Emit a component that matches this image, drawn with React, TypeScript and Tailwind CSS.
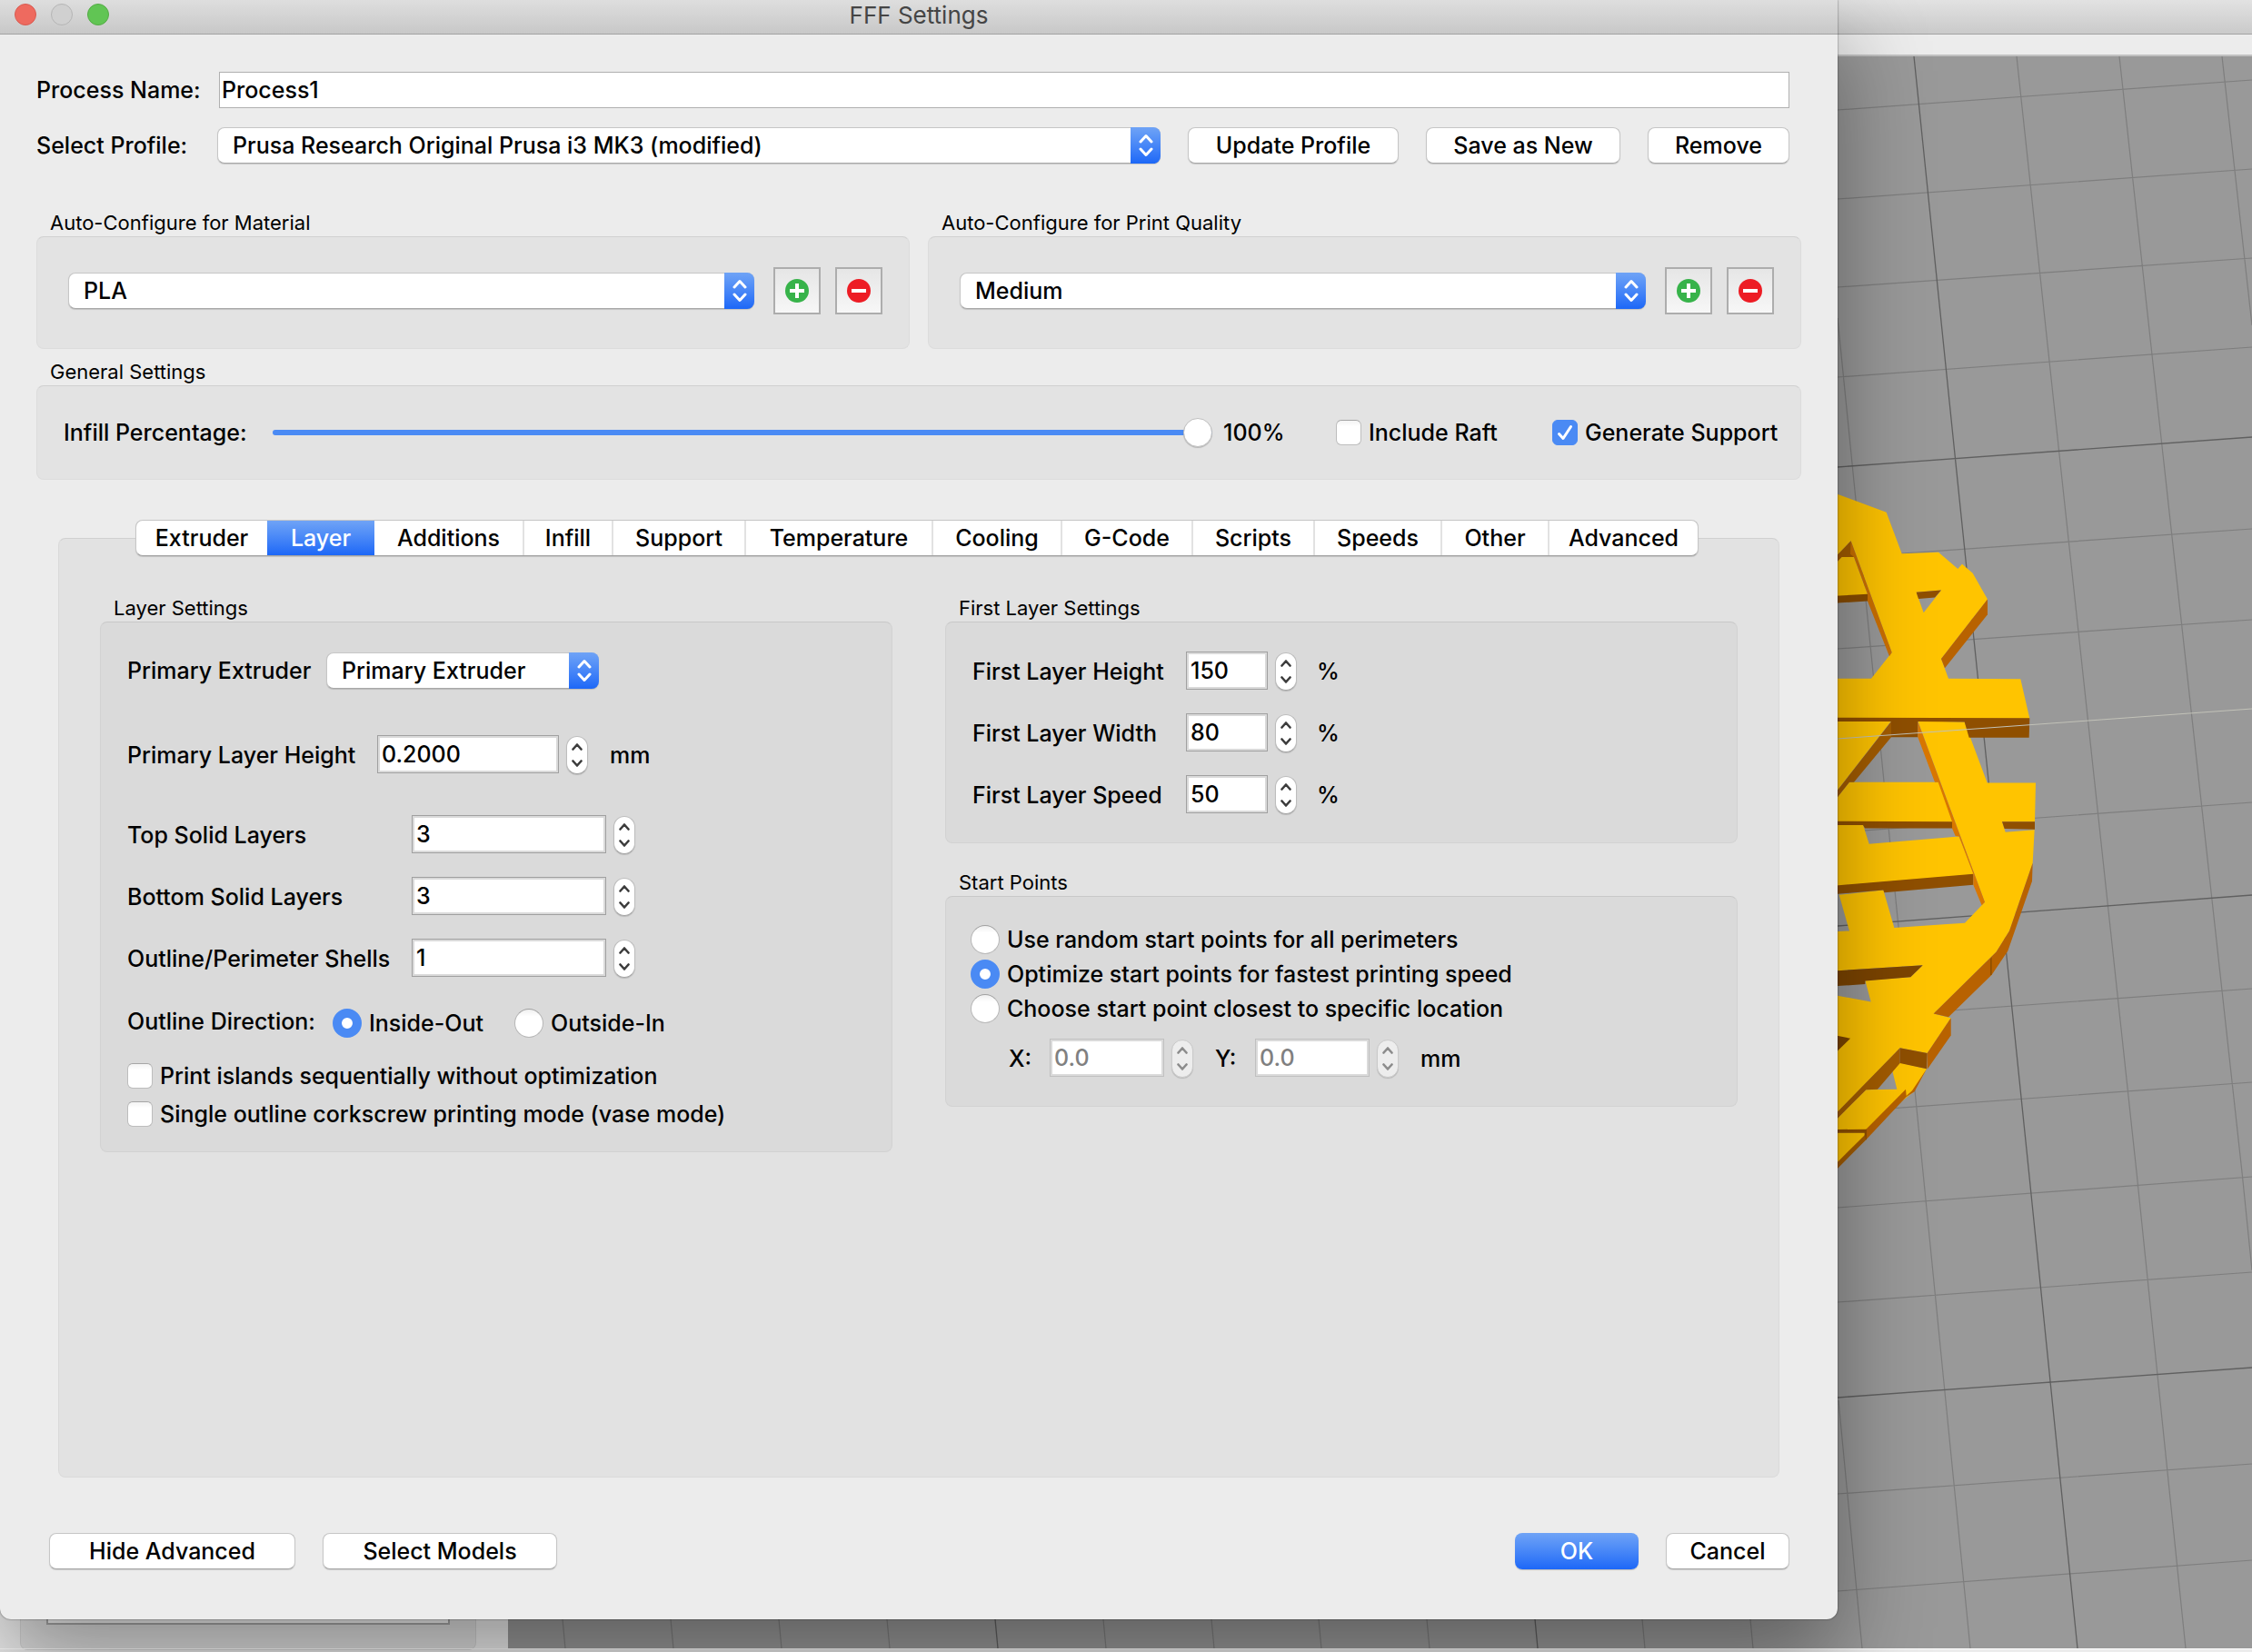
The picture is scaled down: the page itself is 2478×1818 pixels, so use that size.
import React, { useState } from "react";

const tabs = [
  { name: "Extruder", width: "w-[144px]" },
  { name: "Layer", width: "w-[118px]" },
  { name: "Additions", width: "w-[163px]" },
  { name: "Infill", width: "w-[98px]" },
  { name: "Support", width: "w-[146px]" },
  { name: "Temperature", width: "w-[206px]" },
  { name: "Cooling", width: "w-[142px]" },
  { name: "G-Code", width: "w-[144px]" },
  { name: "Scripts", width: "w-[134px]" },
  { name: "Speeds", width: "w-[140px]" },
  { name: "Other", width: "w-[118px]" },
  { name: "Advanced", width: "w-[165px]" },
];

const buttonFrame =
  "h-10 rounded-lg border border-[#c6c6c6] border-b-[#a8a8a8] bg-white shadow-[0_1px_1px_rgba(0,0,0,0.15)]";

function Button({ children, className }: { children: React.ReactNode; className: string }) {
  return (
    <button type="button" className={`${buttonFrame} shrink-0 ${className}`}>
      {children}
    </button>
  );
}

function Select({ id, label, value, className }: { id: string; label?: string; value: string; className: string }) {
  return (
    <div className={`relative ${className}`}>
      <select
        id={id}
        aria-label={label}
        className={`${buttonFrame} block w-full appearance-none pr-10 pl-4 outline-none`}
      >
        <option>{value}</option>
      </select>
      <span className="pointer-events-none absolute inset-y-0 right-0 flex w-[33px] items-center justify-center rounded-r-lg bg-linear-to-b from-[#6fa3f6] to-[#1c67f7]">
        <svg viewBox="0 0 16 26" className="h-[26px] w-4" fill="none" stroke="white" strokeWidth="3" strokeLinecap="round" strokeLinejoin="round" aria-hidden="true">
          <path d="M2 9 8 2.500l6 6.500M2 17l6 6.500 6-6.500" />
        </svg>
      </span>
    </div>
  );
}

function Group({ title, nested, className, children }: { title: string; nested?: boolean; className?: string; children: React.ReactNode }) {
  return (
    <section className={className}>
      <h2 className="mb-px ml-[15px] text-[22px] leading-7 font-normal">{title}</h2>
      <div
        className={
          nested
            ? "rounded-lg border border-[#d2d2d2] border-t-[#c8c8c8] bg-[#dadada]"
            : "rounded-lg border border-[#dcdcdc] border-t-[#d0d0d0] bg-[#e3e3e3]"
        }
      >
        {children}
      </div>
    </section>
  );
}

function Stepper({ name, disabled }: { name: string; disabled?: boolean }) {
  return (
    <span
      className={`mt-px flex h-[42px] w-6 flex-col overflow-hidden rounded-full border shadow-[0_1px_1px_rgba(0,0,0,0.15)] ${
        disabled ? "border-[#cacaca] bg-[#ededed] text-[#8c8c8c]" : "border-[#bdbdbd] border-b-[#a3a3a3] bg-white text-[#3c3c3c]"
      }`}
    >
      <button type="button" disabled={disabled} aria-label={`Increase ${name}`} className="flex flex-1 items-end justify-center pb-[5px]">
        <svg viewBox="0 0 12 8" className="h-2 w-3" fill="none" stroke="currentColor" strokeWidth="2.6" strokeLinecap="round" strokeLinejoin="round" aria-hidden="true">
          <path d="M1.500 6.500 6 1.500l4.500 5" />
        </svg>
      </button>
      <button type="button" disabled={disabled} aria-label={`Decrease ${name}`} className="flex flex-1 items-start justify-center pt-[5px]">
        <svg viewBox="0 0 12 8" className="h-2 w-3" fill="none" stroke="currentColor" strokeWidth="2.6" strokeLinecap="round" strokeLinejoin="round" aria-hidden="true">
          <path d="M1.500 1.500 6 6.500l4.500-5" />
        </svg>
      </button>
    </span>
  );
}

function Spin({ id, name, initial, width, disabled }: { id: string; name: string; initial: string; width: string; disabled?: boolean }) {
  return (
    <span className="flex gap-2">
      <span className={`block h-[42px] border p-[2px] ${width} ${disabled ? "border-[#c0c0c0]" : "border-[#a0a0a0]"}`}>
        <input
          id={id}
          defaultValue={initial}
          disabled={disabled}
          className="block h-full w-full bg-white pl-[2px] outline-none disabled:text-[#808080]"
        />
      </span>
      <Stepper name={name} disabled={disabled} />
    </span>
  );
}

function Check({ label, checked }: { label: string; checked?: boolean }) {
  return (
    <label className="flex h-7 items-center gap-2">
      <span className="relative block size-7">
        <input
          type="checkbox"
          defaultChecked={checked}
          className="peer block size-7 appearance-none rounded-md border border-[#bdbdbd] border-t-[#a6a6a6] bg-linear-to-b from-[#f4f4f4] to-white to-25% checked:border-[#4a8af4] checked:bg-[#4a8af4] checked:bg-none"
        />
        <svg viewBox="0 0 28 28" className="pointer-events-none absolute inset-0 hidden size-7 peer-checked:block" fill="none" stroke="white" strokeWidth="3" strokeLinecap="round" strokeLinejoin="round" aria-hidden="true">
          <path d="M7.500 15.500 12 20.500 20.500 7.500" />
        </svg>
      </span>
      {label}
    </label>
  );
}

function Radio({ name, label, checked }: { name: string; label: string; checked?: boolean }) {
  return (
    <label className="flex h-8 items-center gap-2">
      <input
        type="radio"
        name={name}
        defaultChecked={checked}
        className="block size-8 appearance-none rounded-full border border-[#b8b8b8] border-t-[#a0a0a0] bg-linear-to-b from-[#f0f0f0] to-white to-25% checked:border-[10px] checked:border-[#4a8af4] checked:bg-white checked:bg-none"
      />
      {label}
    </label>
  );
}

function PresetButtons({ kind }: { kind: string }) {
  const frame = "flex size-[52px] shrink-0 items-center justify-center border-2 border-[#adadad] bg-linear-to-b from-[#e6e6e6] to-[#f7f7f7]";
  return (
    <>
      <button type="button" aria-label={`Add ${kind}`} className={`${frame} ml-[21px]`}>
        <svg viewBox="0 0 28 28" className="size-7" aria-hidden="true">
          <circle cx="14" cy="14" r="13" fill="#37b34a" />
          <path d="M14 6v16M6 14h16" stroke="white" strokeWidth="4" />
        </svg>
      </button>
      <button type="button" aria-label={`Remove ${kind}`} className={`${frame} ml-4`}>
        <svg viewBox="0 0 28 28" className="size-7" aria-hidden="true">
          <circle cx="14" cy="14" r="13" fill="#ed1c24" />
          <path d="M6 14h16" stroke="white" strokeWidth="4" />
        </svg>
      </button>
    </>
  );
}

const minorLines = [
  "M2219 62 2266 500 2351 1290 2405 1814",
  "M2332 62 2380 500 2467 1290 2478 1398",
  "M2445 62 2478 358",
  "M2022 350 2037 500 2115 1280 2168 1814",
  "M2023 1541 2049 1814",
  "M619 1782 622 1814M738 1782 741 1814M857 1782 860 1814M976 1782 979 1814",
  "M1214 1782 1217 1814M1333 1782 1336 1814M1451 1782 1454 1814M1570 1782 1573 1814M1807 1782 1810 1814M1926 1782 1929 1814",
  "M2022 121 2478 88M2022 219 2478 186M2022 316 2478 284M2022 415 2478 382",
  "M2022 614 2478 582M2022 714 2478 682M2022 916 2478 883M2022 1121 2478 1088",
  "M2022 1224 2478 1191M2022 1329 2478 1295M2022 1433 2478 1400M2022 1644 2478 1611M2022 1751 2478 1717",
];

const majorLines = [
  "M2106 62 2151 500 2232 1285 2286 1814",
  "M2022 514 2478 481M2022 1019 2478 985M2022 1538 2478 1505",
  "M1689 1782 1692 1814M1095 1782 1098 1814",
];

/* Printed part seen from above: top faces first, then the side walls. */
const topFaces = [
  "M90 76 127 84 287 122 338 209 459 206 523 241 537 231 572 250 621 305 468 430 492 472 730 473 760 556 90 556 90 472 237 472 305 417 170 182 90 235ZM386 290 468 286 410 333Z",
  "M90 216 180 216 226 296 90 300Z",
  "M90 561 303 561 90 736Z",
  "M391 561 545 563 620 691 780 691 777 773 669 773 680 795 776 790 770 860 693 1003 650 1047 443 1177 500 1186 422 1260 332 1249 90 1408 90 1005 165 1003 131 927 277 917 313 996 546 986 612 942ZM90 1088 407 1075 367 1100 217 1107 236 1152 90 1135Z",
  "M90 750 165 690 460 690 506 774 90 774Z",
  "M90 779 210 779 230 820 527 804 576 884 90 910Z",
  "M332 1280 420 1293 376 1342 220 1421 90 1423 90 1420 220 1337 322 1336 307 1298Z",
  "M90 1427 215 1427 218 1434 90 1514Z",
];

const walls = [
  { fill: "#a35c00", d: "M90 235 170 182 180 216 140 216 90 249Z" },
  { fill: "#8a4d00", d: "M90 299 225 294 225 309 90 314Z" },
  { fill: "#cc7000", d: "M170 182 305 417 297 425 225 309 225 294 180 216 168 210Z" },
  { fill: "#8f4f00", d: "M386 290 468 286 447 301 393 304Z" },
  { fill: "#b86200", d: "M621 305 621 337 480 450 468 430Z" },
  { fill: "#8f4f00", d: "M90 554 760 555 758 596 560 596 545 563 391 562 391 595 303 595 303 562 90 562Z" },
  { fill: "#a35c00", d: "M303 562 303 595 180 690 165 690 90 750 90 736Z" },
  { fill: "#8f4f00", d: "M90 772 504 773 504 787 216 787 210 780 90 780Z" },
  { fill: "#8f4f00", d: "M669 773 777 773 777 789 677 788Z" },
  { fill: "#8f4f00", d: "M90 909 574 883 574 906 280 922 277 917 90 927Z" },
  { fill: "#d97700", d: "M391 562 612 942 602 949 574 906 574 883 527 804 515 803 504 787 504 773 458 690 447 690 391 595Z" },
  { fill: "#7d4500", d: "M90 1088 407 1075 367 1100 217 1108 217 1115 90 1120Z" },
  { fill: "#7d4500", d: "M90 1219 168 1229 90 1278Z" },
  { fill: "#a35c00", d: "M332 1249 332 1281 258 1336 220 1337 90 1420 90 1407Z" },
  { fill: "#8f4f00", d: "M332 1249 422 1260 420 1293 332 1281Z" },
  { fill: "#b86200", d: "M500 1186 500 1223 422 1294 422 1260Z" },
  { fill: "#b86200", d: "M770 860 768 898 688 1045 635 1095 492 1184 443 1177 650 1047 693 1003Z" },
  { fill: "#8f4f00", d: "M630 1062 635 1058 635 1095 630 1096Z" },
  { fill: "#b86200", d: "M420 1293 380 1341 353 1352 220 1442 220 1420 351 1336 353 1350 372 1339Z" },
  { fill: "#8f4f00", d: "M90 1421 222 1420 222 1442 215 1442 215 1428 90 1428Z" },
  { fill: "#a35c00", d: "M90 1512 216 1432 220 1442 90 1526Z" },
];

function Viewport() {
  return (
    <svg viewBox="559 62 1919 1752" preserveAspectRatio="xMaxYMin slice" className="block size-full bg-[#999999]" role="img" aria-label="Print bed preview">
      <path d={minorLines.join("")} fill="none" stroke="#7e7e7e" strokeWidth="1.2" />
      <path d={majorLines.join("")} fill="none" stroke="#606060" strokeWidth="1.3" />
      <g transform="translate(1980 500) scale(0.33333 0.52298)">
        {topFaces.map((d) => (
          <path key={d} d={d} fill="#ffc400" fillRule="evenodd" />
        ))}
        {walls.map((wall) => (
          <path key={wall.d} d={wall.d} fill={wall.fill} />
        ))}
      </g>
      <path d="M2022 813 2478 780" stroke="#c2c2b8" strokeWidth="1" />
    </svg>
  );
}

function MainWindow() {
  return (
    <div className="col-start-1 row-start-1 flex min-h-0 flex-col bg-[#ececec]">
      <div className="h-[38px] border-b border-[#a3a3a3] bg-linear-to-b from-[#e2e2e2] to-[#cacaca]" />
      <div className="h-6 border-b-2 border-[#c0c0c0]" />
      <div className="flex min-h-0 flex-1">
        <div className="flex w-[559px] shrink-0 flex-col pr-[35px] pl-[22px]">
          <div className="-mb-[2px] flex flex-1 flex-col rounded-lg border border-[#d2d2d2] bg-[#dfdfdf] px-7 pb-[27px]">
            <div className="flex-1 border-2 border-[#a8a8a8] bg-[#f4f4f4]" />
          </div>
        </div>
        <div className="relative min-w-0 flex-1">
          <div className="absolute inset-0">
            <Viewport />
          </div>
        </div>
      </div>
      <div className="h-1 border-t border-white" />
    </div>
  );
}

function LayerSettings() {
  const solid = [
    { id: "top", label: "Top Solid Layers", value: "3" },
    { id: "bottom", label: "Bottom Solid Layers", value: "3" },
    { id: "shells", label: "Outline/Perimeter Shells", value: "1" },
  ];
  return (
    <Group title="Layer Settings" nested>
      <div className="flex flex-col px-[29px] pt-[33px] pb-[27px]">
        <div className="flex items-center">
          <label htmlFor="extruder" className="w-[219px]">Primary Extruder</label>
          <Select id="extruder" value="Primary Extruder" className="w-[300px]" />
        </div>
        <div className="mt-[51px] flex items-center">
          <label htmlFor="height" className="w-[275px]">Primary Layer Height</label>
          <Spin id="height" name="Primary Layer Height" initial="0.2000" width="w-[200px]" />
          <span className="ml-6">mm</span>
        </div>
        <div className="mt-[45px] flex flex-col gap-[25px]">
          {solid.map((row) => (
            <div key={row.id} className="flex items-center">
              <label htmlFor={row.id} className="w-[313px]">{row.label}</label>
              <Spin id={row.id} name={row.label} initial={row.value} width="w-[214px]" />
            </div>
          ))}
        </div>
        <div role="radiogroup" aria-label="Outline Direction" className="mt-8 flex items-center">
          <span className="w-[226px] pb-1">Outline Direction:</span>
          <div className="w-[200px]">
            <Radio name="direction" label="Inside-Out" checked />
          </div>
          <Radio name="direction" label="Outside-In" />
        </div>
        <div className="mt-[26px] flex flex-col gap-[14px]">
          <Check label="Print islands sequentially without optimization" />
          <Check label="Single outline corkscrew printing mode (vase mode)" />
        </div>
      </div>
    </Group>
  );
}

function FirstLayerSettings() {
  const rows = [
    { id: "first-height", label: "First Layer Height", value: "150" },
    { id: "first-width", label: "First Layer Width", value: "80" },
    { id: "first-speed", label: "First Layer Speed", value: "50" },
  ];
  return (
    <Group title="First Layer Settings" nested>
      <div className="flex flex-col gap-[25px] px-[29px] pt-8 pb-[31px]">
        {rows.map((row) => (
          <div key={row.id} className="flex items-center">
            <label htmlFor={row.id} className="w-[235px]">{row.label}</label>
            <Spin id={row.id} name={row.label} initial={row.value} width="w-[90px]" />
            <span className="ml-[22px]">%</span>
          </div>
        ))}
      </div>
    </Group>
  );
}

function StartPoints() {
  return (
    <Group title="Start Points" nested className="mt-[29px]">
      <div className="px-[27px] pt-[31px] pb-[31px]">
        <div role="radiogroup" aria-label="Start Points" className="flex flex-col gap-[6px]">
          <Radio name="start" label="Use random start points for all perimeters" />
          <Radio name="start" label="Optimize start points for fastest printing speed" checked />
          <Radio name="start" label="Choose start point closest to specific location" />
        </div>
        <div className="mt-[17px] ml-[42px] flex items-center">
          <label htmlFor="start-x" className="w-[45px]">X:</label>
          <Spin id="start-x" name="X" initial="0.0" width="w-[126px]" disabled />
          <label htmlFor="start-y" className="ml-6 w-11">Y:</label>
          <Spin id="start-y" name="Y" initial="0.0" width="w-[126px]" disabled />
          <span className="ml-6">mm</span>
        </div>
      </div>
    </Group>
  );
}

function SettingsDialog() {
  const [active, setActive] = useState("Layer");
  return (
    <div className="z-10 col-start-1 row-start-1 flex pr-[456px] pb-9">
      <main className="flex min-w-0 flex-1 flex-col rounded-b-xl bg-[#ececec] shadow-[0_45px_100px_rgba(0,0,0,0.38),0_0_2px_rgba(0,0,0,0.6)]">
        <header className="relative flex h-[38px] items-center justify-center border-b border-[#a3a3a3] bg-linear-to-b from-[#dedede] to-[#c8c8c8] pb-1">
          <div className="absolute top-1 left-4 flex gap-4">
            <button type="button" aria-label="Close" className="size-6 rounded-full border border-[#d95a50] bg-[#ee6a5f]" />
            <button type="button" aria-label="Minimize" disabled className="size-6 rounded-full border border-[#b5b5b5] bg-[#d0d0d0]" />
            <button type="button" aria-label="Zoom" className="size-6 rounded-full border border-[#54ab45] bg-[#61c554]" />
          </div>
          <h1 className="text-[26px] font-normal text-[#454545]">FFF Settings</h1>
        </header>

        <div className="flex flex-1 flex-col px-10 pt-[41px]">
          <div className="flex items-center pr-[13px]">
            <label htmlFor="process" className="w-[201px]">Process Name:</label>
            <input id="process" defaultValue="Process1" className="h-10 min-w-0 flex-1 border border-[#b0b0b0] bg-white pl-[2px] outline-none" />
          </div>
          <div className="mt-[21px] flex items-center pr-[13px]">
            <label htmlFor="profile" className="w-[199px]">Select Profile:</label>
            <Select id="profile" value="Prusa Research Original Prusa i3 MK3 (modified)" className="min-w-0 flex-1" />
            <Button className="ml-[30px] w-[232px]">Update Profile</Button>
            <Button className="ml-[30px] w-[214px]">Save as New</Button>
            <Button className="ml-[30px] w-[156px]">Remove</Button>
          </div>

          <div className="mt-[51px] grid grid-cols-2 gap-5">
            <Group title="Auto-Configure for Material">
              <div className="flex items-center pt-[33px] pr-[29px] pb-[37px] pl-[34px]">
                <Select id="material" label="Material" value="PLA" className="min-w-0 flex-1" />
                <PresetButtons kind="material" />
              </div>
            </Group>
            <Group title="Auto-Configure for Print Quality">
              <div className="flex items-center pt-[33px] pr-[29px] pb-[37px] pl-[34px]">
                <Select id="quality" label="Print quality" value="Medium" className="min-w-0 flex-1" />
                <PresetButtons kind="print quality" />
              </div>
            </Group>
          </div>

          <Group title="General Settings" className="mt-[11px]">
            <div className="flex h-[102px] items-center pr-[22px] pl-[29px]">
              <label htmlFor="infill" className="w-[230px]">Infill Percentage:</label>
              <input
                id="infill"
                type="range"
                defaultValue={100}
                className="h-8 min-w-0 flex-1 appearance-none bg-transparent [&::-webkit-slider-runnable-track]:h-[6px] [&::-webkit-slider-runnable-track]:rounded-full [&::-webkit-slider-runnable-track]:bg-[#4a8af4] [&::-webkit-slider-thumb]:-mt-[13px] [&::-webkit-slider-thumb]:size-8 [&::-webkit-slider-thumb]:appearance-none [&::-webkit-slider-thumb]:rounded-full [&::-webkit-slider-thumb]:border [&::-webkit-slider-thumb]:border-[#c0c0c0] [&::-webkit-slider-thumb]:bg-white [&::-webkit-slider-thumb]:shadow-[0_1px_1px_rgba(0,0,0,0.2)]"
              />
              <output htmlFor="infill" className="ml-3 w-[124px]">100%</output>
              <div className="w-[238px]">
                <Check label="Include Raft" />
              </div>
              <div className="w-[251px]">
                <Check label="Generate Support" checked />
              </div>
            </div>
          </Group>

          <div className="mx-6 mt-[44px] flex flex-1 flex-col">
            <div role="tablist" className="relative z-10 ml-[85px] flex self-start overflow-hidden rounded-lg border border-[#c6c6c6] border-b-[#a3a3a3] bg-white shadow-[0_1px_1px_rgba(0,0,0,0.15)]">
              {tabs.map((tab, index) => (
                <button
                  key={tab.name}
                  type="button"
                  role="tab"
                  aria-selected={tab.name === active}
                  onClick={() => setActive(tab.name)}
                  className={`h-[38px] ${tab.width} ${
                    tab.name === active
                      ? "bg-linear-to-b from-[#6fa3f6] to-[#1c67f7] text-white"
                      : index > 2
                        ? "border-l-2 border-[#e2e2e2]"
                        : ""
                  }`}
                >
                  {tab.name}
                </button>
              ))}
            </div>
            <div role="tabpanel" className="-mt-5 grid flex-1 grid-cols-2 items-start gap-[58px] rounded-lg border border-[#dadada] border-t-[#d0d0d0] bg-[#e2e2e2] px-[45px] pt-[62px]">
              <LayerSettings />
              <div>
                <FirstLayerSettings />
                <StartPoints />
              </div>
            </div>
          </div>

          <footer className="mt-[61px] mb-[55px] flex pr-[13px] pl-[14px]">
            <Button className="w-[271px]">Hide Advanced</Button>
            <Button className="ml-[30px] w-[258px]">Select Models</Button>
            <button type="button" className="ml-auto h-10 w-[136px] rounded-lg bg-linear-to-b from-[#6fa3f6] to-[#1c67f7] text-white shadow-[0_1px_1px_rgba(0,0,0,0.2)]">
              OK
            </button>
            <Button className="ml-[30px] w-[136px]">Cancel</Button>
          </footer>
        </div>
      </main>
    </div>
  );
}

export default function App() {
  return (
    <div className="grid min-h-screen grid-cols-1 overflow-hidden font-['Inter',sans-serif] text-[25px] leading-8 font-medium text-black">
      <MainWindow />
      <SettingsDialog />
    </div>
  );
}
